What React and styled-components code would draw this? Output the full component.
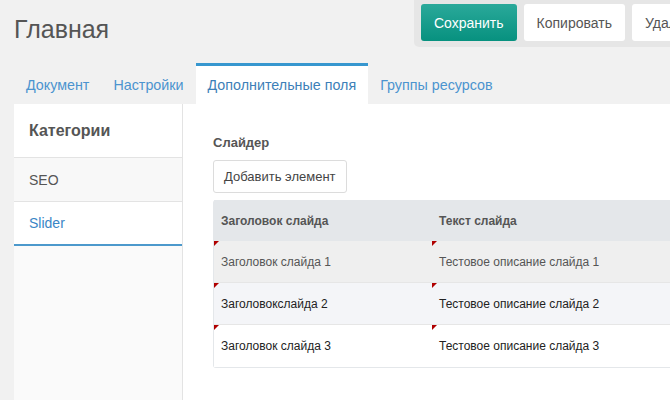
import React from 'react';
import styled, { createGlobalStyle } from 'styled-components';

const GlobalStyle = createGlobalStyle`
  html, body {
    margin: 0;
    padding: 0;
    overflow: hidden;
    background: #f1f1f1;
    font-family: "Liberation Sans", Arial, sans-serif;
  }
`;

const Page = styled.div`
  width: 670px;
  height: 400px;
  overflow: hidden;
  display: flex;
  flex-direction: column;
`;

const Header = styled.div`
  display: flex;
  align-items: flex-start;
  height: 47px;
`;

const Title = styled.h1`
  margin: 14px 0 0 14px;
  font-size: 25px;
  font-weight: normal;
  color: #555;
  line-height: 30px;
`;

const Toolbar = styled.div`
  margin-left: auto;
  display: flex;
  gap: 7px;
  padding: 4px 0 6px 7px;
  background: #e6e6e6;
  border-bottom-left-radius: 5px;
  width: 256px;
  overflow: hidden;
  box-sizing: border-box;
`;

const ToolButton = styled.button`
  flex: none;
  height: 37px;
  padding: 0 ${(p) => (p.$primary ? 13 : 13)}px;
  border: none;
  border-radius: 3px;
  font-family: inherit;
  font-size: 14px;
  white-space: nowrap;
  color: ${(p) => (p.$primary ? '#fff' : '#555')};
  background: ${(p) => (p.$primary ? 'linear-gradient(#2aa99a, #07917f)' : '#fff')};
`;

const Tabs = styled.div`
  display: flex;
  margin-top: 16px;
  padding-left: 14px;
  height: 41px;
`;

const Tab = styled.div`
  box-sizing: border-box;
  padding: 0 12px;
  height: 41px;
  display: flex;
  align-items: center;
  font-size: 14.3px;
  color: ${(p) => (p.$active ? '#3d7fb8' : '#4b94cf')};
  background: ${(p) => (p.$active ? '#fff' : 'transparent')};
  border-top: 3px solid ${(p) => (p.$active ? '#3797cf' : 'transparent')};
  padding-bottom: 1px;
`;

const Panel = styled.div`
  flex: 1;
  margin-left: 14px;
  background: #fff;
  display: flex;
  min-height: 0;
`;

const Sidebar = styled.div`
  width: 168px;
  flex: none;
  border-right: 1px solid #e3e3e3;
  background: #fafafa;
  display: flex;
  flex-direction: column;
`;

const SideHead = styled.div`
  height: 54px;
  box-sizing: border-box;
  padding: 1px 0 0 15px;
  display: flex;
  align-items: center;
  background: #fff;
  border-bottom: 1px solid #e3e3e3;
  font-size: 16px;
  font-weight: bold;
  color: #555;
`;

const SideItem = styled.div`
  height: 44px;
  box-sizing: border-box;
  padding-left: 15px;
  display: flex;
  align-items: center;
  font-size: 14px;
  color: ${(p) => (p.$active ? '#3a86c6' : '#555')};
  background: ${(p) => (p.$active ? '#fff' : '#f8f8f8')};
  border-bottom: ${(p) => (p.$active ? '2px solid #4c99cc' : '1px solid #e3e3e3')};
`;

const Content = styled.div`
  flex: 1;
  padding: 31px 0 0 30px;
  min-width: 0;
`;

const Label = styled.div`
  font-size: 13px;
  font-weight: bold;
  color: #555;
  line-height: 16px;
`;

const AddButton = styled.button`
  margin-top: 9px;
  height: 33px;
  padding: 0 10px;
  border: 1px solid #dcdcdc;
  border-radius: 3px;
  background: #fff;
  font-family: inherit;
  font-size: 13px;
  color: #444;
`;

const Table = styled.div`
  margin-top: 7px;
  width: 560px;
  border: 1px solid #e4e7ea;
  border-top: none;
  border-radius: 3px 0 0 3px;
`;

const Row = styled.div`
  display: grid;
  grid-template-columns: 217px 1fr;
  height: ${(p) => (p.$head ? 41 : 42)}px;
  box-sizing: border-box;
  background: ${(p) => p.$bg};
  border-bottom: ${(p) => (p.$head ? 'none' : '1px solid #e6e6e6')};
  &:last-child {
    border-bottom: none;
  }
`;

const Cell = styled.div`
  position: relative;
  display: flex;
  align-items: center;
  padding-left: 7px;
  font-size: 12px;
  font-weight: ${(p) => (p.$head ? 'bold' : 'normal')};
  color: ${(p) => p.$color};
  & + & {
    border-left: 1px solid ${(p) => (p.$head ? '#fff' : 'transparent')};
  }
`;

const Mark = styled.span`
  position: absolute;
  top: 0;
  left: 0;
  width: 0;
  height: 0;
  border-top: 5px solid #b00000;
  border-right: 5px solid transparent;
`;

const rows = [
  { title: 'Заголовок слайда 1', text: 'Тестовое описание слайда 1', bg: '#efefef', color: '#555' },
  { title: 'Заголовокслайда 2', text: 'Тестовое описание слайда 2', bg: '#f4f5f8', color: '#222' },
  { title: 'Заголовок слайда 3', text: 'Тестовое описание слайда 3', bg: '#fff', color: '#222' },
];

const App = () => (
  <Page>
    <GlobalStyle />
    <Header>
      <Title>Главная</Title>
      <Toolbar>
        <ToolButton $primary>Сохранить</ToolButton>
        <ToolButton>Копировать</ToolButton>
        <ToolButton>Удалить</ToolButton>
      </Toolbar>
    </Header>
    <Tabs>
      <Tab>Документ</Tab>
      <Tab>Настройки</Tab>
      <Tab $active>Дополнительные поля</Tab>
      <Tab>Группы ресурсов</Tab>
    </Tabs>
    <Panel>
      <Sidebar>
        <SideHead>Категории</SideHead>
        <SideItem>SEO</SideItem>
        <SideItem $active>Slider</SideItem>
      </Sidebar>
      <Content>
        <Label>Слайдер</Label>
        <AddButton>Добавить элемент</AddButton>
        <Table>
          <Row $head $bg="#e4e7ea">
            <Cell $head $color="#555">Заголовок слайда</Cell>
            <Cell $head $color="#555">Текст слайда</Cell>
          </Row>
          {rows.map((r) => (
            <Row key={r.title} $bg={r.bg}>
              <Cell $color={r.color}>
                <Mark />
                {r.title}
              </Cell>
              <Cell $color={r.color}>
                <Mark />
                {r.text}
              </Cell>
            </Row>
          ))}
        </Table>
      </Content>
    </Panel>
  </Page>
);

export default App;
